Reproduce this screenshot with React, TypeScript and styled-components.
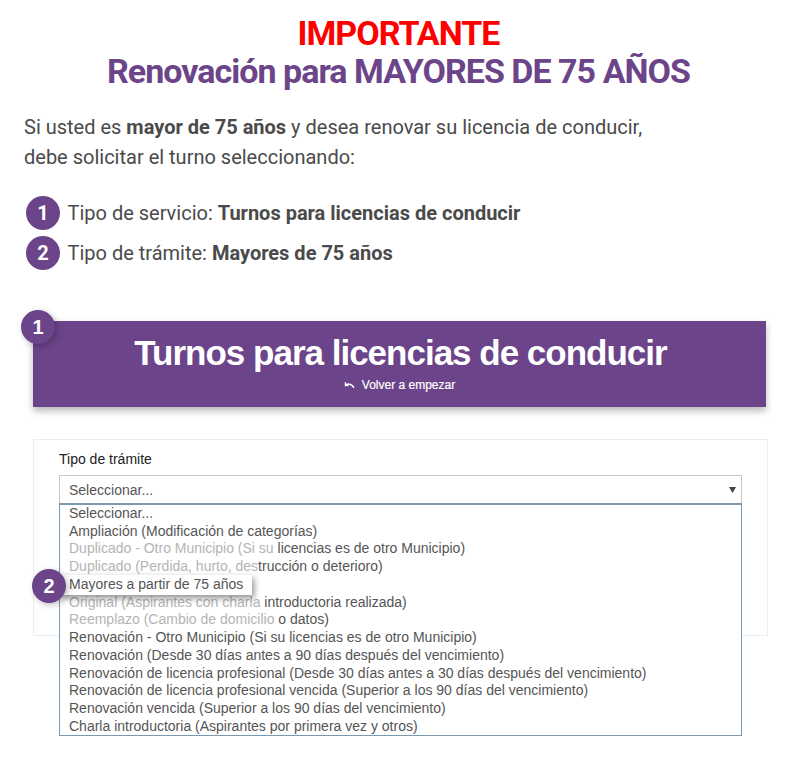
import React from "react";
import styled, { createGlobalStyle } from "styled-components";

const purple = "#6b4489";

const GlobalStyle = createGlobalStyle`
  html, body {
    margin: 0;
    background: #fff;
  }
  body {
    font-family: "Roboto", sans-serif;
    color: #4a4a4a;
  }
`;

const Page = styled.div`
  width: 800px;
  height: 772px;
  overflow: hidden;
  padding-top: 14px;
  box-sizing: border-box;
`;

const Heading = styled.h1`
  margin: 0;
  padding-right: 3px;
  text-align: center;
  font-size: 34px;
  line-height: 38px;
  letter-spacing: -0.97px;
  font-weight: 700;
  color: ${purple};
  span {
    display: block;
    color: #ff0000;
  }
`;

const Intro = styled.p`
  margin: 22px 0 0 24px;
  font-size: 20px;
  line-height: 30px;
  b {
    font-weight: 700;
  }
`;

const Steps = styled.ul`
  list-style: none;
  margin: 24px 0 0 26px;
  padding: 0;
  display: flex;
  flex-direction: column;
  gap: 6px;
`;

const Step = styled.li`
  display: flex;
  align-items: center;
  gap: 7.5px;
  font-size: 20px;
  height: 34px;
  b {
    font-weight: 700;
  }
`;

const Circle = styled.span<{ $shadow?: boolean }>`
  width: 34px;
  height: 34px;
  border-radius: 50%;
  background: ${purple};
  color: #fff;
  font-weight: 700;
  font-size: 20px;
  display: flex;
  align-items: center;
  justify-content: center;
  flex: none;
  box-shadow: ${(p) => (p.$shadow ? "2px 2px 6px rgba(0,0,0,.25)" : "none")};
`;

const FloatCircle = styled(Circle)<{ $left: number; $top: number }>`
  position: absolute;
  left: ${(p) => p.$left}px;
  top: ${(p) => p.$top}px;
  z-index: 3;
`;

const Banner = styled.div`
  position: relative;
  margin: 51px 34px 0 33px;
  height: 86px;
  background: ${purple};
  box-shadow: 0 4px 7px rgba(0, 0, 0, 0.28);
  color: #fff;
  font-family: "Liberation Sans", Arial, sans-serif;
  text-align: center;
  padding-top: 11px;
  box-sizing: border-box;
`;

const BannerTitle = styled.div`
  padding-left: 2px;
  font-size: 35px;
  line-height: 42px;
  letter-spacing: -1px;
  font-weight: 700;
`;

const BackLink = styled.div`
  margin-top: 3px;
  font-size: 12px;
  line-height: 16px;
  -webkit-text-stroke: 0.2px #fff;
  display: flex;
  justify-content: center;
  align-items: center;
  gap: 7px;
  svg {
    width: 11px;
    height: 9px;
  }
`;

const Panel = styled.div`
  position: relative;
  margin: 32px 32px 0 33px;
  height: 197px;
  border: 1px solid #eceeee;
  box-sizing: border-box;
  padding: 11px 25px 0;
  font-family: "Liberation Sans", Arial, sans-serif;
`;

const Label = styled.div`
  font-size: 14px;
  line-height: 16px;
  color: #222;
`;

const SelectBox = styled.div`
  margin-top: 8px;
  height: 29px;
  border: 1px solid #c4c8cc;
  box-sizing: border-box;
  padding: 0 4px 0 9px;
  display: flex;
  align-items: center;
  justify-content: space-between;
  font-size: 14px;
  color: #555;
  svg {
    width: 7px;
    height: 6px;
    margin-right: 1px;
  }
`;

const Options = styled.ul`
  position: absolute;
  left: 25px;
  right: 25px;
  top: 63px;
  z-index: 1;
  margin: 0;
  padding: 0 0 0 9px;
  height: 233px;
  box-sizing: border-box;
  list-style: none;
  background: #fff;
  border: 1px solid #7a9ab4;
  border-top-width: 2px;
  font-size: 14px;
  color: #555;
`;

const Option = styled.li`
  height: 17.7px;
  line-height: 17.7px;
  white-space: nowrap;
`;

const Faint = styled.span`
  color: #b4b4b4;
`;

const Picked = styled(Option)`
  position: relative;
  z-index: 2;
  margin-left: -9px;
  padding-left: 9px;
  padding-right: 9px;
  width: max-content;
  height: 20px;
  line-height: 19px;
  margin-top: -1px;
  margin-bottom: -1px;
  background: #fff;
  box-shadow: 2px 3px 6px rgba(0, 0, 0, 0.45);
`;

export default function App() {
  return (
    <Page>
      <GlobalStyle />
      <Heading>
        <span>IMPORTANTE</span>
        Renovación para MAYORES DE 75 AÑOS
      </Heading>
      <Intro>
        Si usted es <b>mayor de 75 años</b> y desea renovar su licencia de conducir,
        <br />
        debe solicitar el turno seleccionando:
      </Intro>
      <Steps>
        <Step>
          <Circle>1</Circle>
          <span>
            Tipo de servicio: <b>Turnos para licencias de conducir</b>
          </span>
        </Step>
        <Step>
          <Circle>2</Circle>
          <span>
            Tipo de trámite: <b>Mayores de 75 años</b>
          </span>
        </Step>
      </Steps>
      <Banner>
        <FloatCircle $shadow $left={-12} $top={-11}>
          1
        </FloatCircle>
        <BannerTitle>Turnos para licencias de conducir</BannerTitle>
        <BackLink>
          <svg viewBox="0 0 12 10" fill="none" stroke="#fff" strokeWidth="1.6">
            <path d="M1.5 1.5v3.5h3.5" />
            <path d="M1.5 5C3 3.2 7.5 1.8 11 7.5" />
          </svg>
          Volver a empezar
        </BackLink>
      </Banner>
      <Panel>
        <Label>Tipo de trámite</Label>
        <SelectBox>
          Seleccionar...
          <svg viewBox="0 0 7 6">
            <path d="M0 0h7L3.5 6z" fill="#444" />
          </svg>
        </SelectBox>
        <Options>
          <FloatCircle $shadow $left={-28} $top={64}>
            2
          </FloatCircle>
          <Option>Seleccionar...</Option>
          <Option>Ampliación (Modificación de categorías)</Option>
          <Option>
            <Faint>Duplicado - Otro Municipio (Si su</Faint> licencias es de otro Municipio)
          </Option>
          <Option>
            <Faint>Duplicado (Perdida, hurto, des</Faint>trucción o deterioro)
          </Option>
          <Picked>Mayores a partir de 75 años</Picked>
          <Option>
            <Faint>Original (Aspirantes con charla</Faint> introductoria realizada)
          </Option>
          <Option>
            <Faint>Reemplazo (Cambio de domicilio</Faint> o datos)
          </Option>
          <Option>Renovación - Otro Municipio (Si su licencias es de otro Municipio)</Option>
          <Option>Renovación (Desde 30 días antes a 90 días después del vencimiento)</Option>
          <Option>Renovación de licencia profesional (Desde 30 días antes a 30 días después del vencimiento)</Option>
          <Option>Renovación de licencia profesional vencida (Superior a los 90 días del vencimiento)</Option>
          <Option>Renovación vencida (Superior a los 90 días del vencimiento)</Option>
          <Option>Charla introductoria (Aspirantes por primera vez y otros)</Option>
        </Options>
      </Panel>
    </Page>
  );
}
